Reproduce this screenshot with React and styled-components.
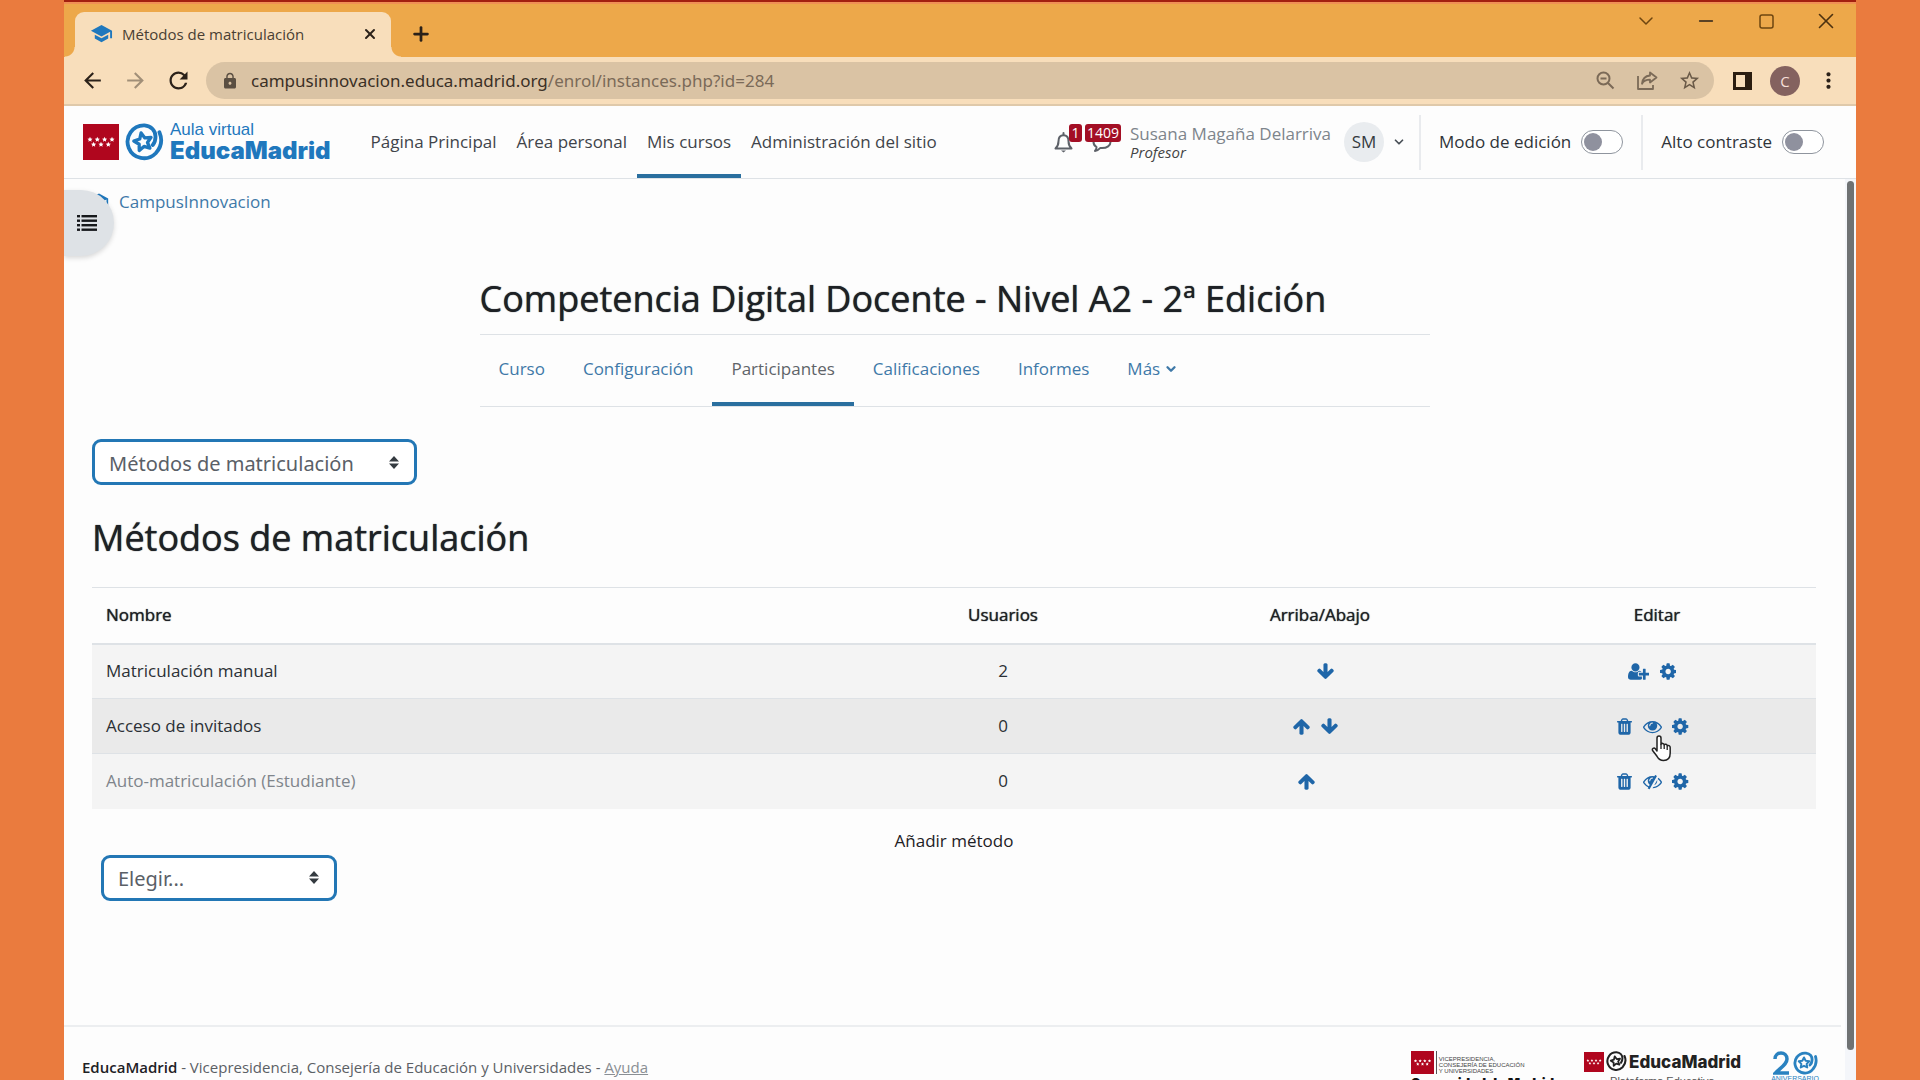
import React from "react";
import styled, { createGlobalStyle, css } from "styled-components";
import { ChevronDown, Minus, Plus, X } from "lucide-react";
import {
  MdArrowBack,
  MdArrowForward,
  MdRefresh,
  MdLock,
  MdStarBorder,
  MdMoreVert,
  MdSchool,
} from "react-icons/md";

const color = {
  desk: "#ea7b3e",
  strip: "#eda84a",
  chrome: "#f8debb",
  omnibox: "#dac3a4",
  page: "#fdfdfd",
  line: "#dee2e6",
  text: "#1d2125",
  link: "#3f79a8",
  accent: "#2a6f9f",
  icon: "#1f66a8",
  brand: "#1f78bd",
  red: "#b0061e",
};

const GlobalStyle = createGlobalStyle`
  *, *::before, *::after { box-sizing: border-box; }
  body {
    margin: 0;
    background: ${color.desk};
    color: ${color.text};
    font-family: "Open Sans", "Noto Sans", sans-serif;
    font-size: 17px;
    line-height: 26px;
  }
  button, select, input { font: inherit; color: inherit; }
  button { padding: 0; border: 0; background: none; cursor: pointer; }
  a { text-decoration: none; color: inherit; }
  svg { display: block; flex: none; }
`;

const Desktop = styled.div`
  height: 100vh;
  padding: 0 64px;
  overflow: hidden;
`;

const BrowserWindow = styled.div`
  display: flex;
  flex-direction: column;
  height: 100%;
  overflow: hidden;
  background: ${color.page};
`;

/* ---------- Browser chrome ---------- */

const TabStrip = styled.div`
  display: flex;
  align-items: flex-end;
  height: 57px;
  padding: 0 18px 0 11px;
  border-top: 2px solid #a3200f;
  background: ${color.strip};
  box-shadow: inset 0 2px #f09055;
`;

const BrowserTab = styled.div`
  position: relative;
  display: flex;
  align-items: center;
  width: 316px;
  height: 45px;
  padding: 0 12px 2px 15px;
  border-radius: 9px 9px 0 0;
  background: ${color.chrome};
  font-size: 15px;
  color: #4a3f33;

  &::before,
  &::after {
    content: "";
    position: absolute;
    bottom: 0;
    width: 10px;
    height: 10px;
  }
  &::before {
    right: 100%;
    background: radial-gradient(circle at 0 0, transparent 9px, ${color.chrome} 10px);
  }
  &::after {
    left: 100%;
    background: radial-gradient(circle at 100% 0, transparent 9px, ${color.chrome} 10px);
  }
`;

const TabTitle = styled.span`
  flex: 1;
  margin-left: 9px;
  white-space: nowrap;
`;

const ChromeButton = styled.button`
  display: flex;
  align-items: center;
  justify-content: center;
  width: ${(p) => p.$size || 24}px;
  height: ${(p) => p.$size || 24}px;
  color: ${(p) => p.$color || "#2b2119"};
`;

const NewTab = styled(ChromeButton)`
  margin: 0 0 11px 18px;
`;

const WindowControls = styled.div`
  display: flex;
  align-self: flex-start;
  gap: 36px;
  margin: 7px 0 0 auto;
`;

const Toolbar = styled.div`
  display: flex;
  align-items: center;
  height: 49px;
  padding: 0 16px;
  border-bottom: 2px solid #dfc9aa;
  background: ${color.chrome};
`;

const ToolGroup = styled.div`
  display: flex;
  align-items: center;
  gap: ${(p) => p.$gap}px;
`;

const Omnibox = styled.div`
  display: flex;
  flex: 1;
  align-items: center;
  height: 37px;
  margin: 0 16px;
  padding: 0 13px 0 15px;
  border-radius: 19px;
  background: ${color.omnibox};
`;

const Address = styled.div`
  flex: 1;
  margin-left: 12px;
  white-space: nowrap;
  color: #7a6a58;
  font-family: "Noto Sans", "Open Sans", sans-serif;

  b {
    font-weight: 400;
    color: #3b3026;
  }
`;

const ProfileBadge = styled.button`
  width: 30px;
  height: 30px;
  border-radius: 50%;
  background: #84625f;
  color: #f6dfd8;
  font-size: 15px;
`;

/* ---------- Site header ---------- */

const SiteHeader = styled.header`
  display: flex;
  align-items: stretch;
  height: 73px;
  padding: 0 32px 0 19px;
  border-bottom: 1px solid ${color.line};
`;

const Brand = styled.a`
  display: flex;
  align-items: center;
  gap: 6px;
  margin-right: 30px;
`;

const BrandText = styled.span`
  display: flex;
  flex-direction: column;
  color: ${color.brand};
  font-family: "Liberation Sans", Arial, sans-serif;
  font-size: 17px;
  line-height: 18px;

  strong {
    font-family: Inter, "Liberation Sans", sans-serif;
    font-weight: 900;
    font-size: 24px;
    line-height: 24px;
  }
`;

const MainNav = styled.nav`
  display: flex;
`;

const activeBar = css`
  box-shadow: inset 0 -4px ${color.accent};
`;

const MainNavLink = styled.a`
  display: flex;
  align-items: center;
  padding: 0 10px;
  color: #3f444a;
  white-space: nowrap;
  ${(p) => p.$active && activeBar}
`;

const UserArea = styled.div`
  display: flex;
  align-items: center;
  margin-left: auto;
`;

const Notice = styled.button`
  position: relative;
  display: flex;
  margin-right: ${(p) => p.$gap}px;
  color: #5d6168;
`;

const Count = styled.span`
  position: absolute;
  left: ${(p) => (p.$wide ? -7 : 15)}px;
  bottom: 11px;
  min-width: 13px;
  padding: 0 2px;
  border-radius: 3px;
  background: #a30f25;
  color: #fff;
  font-size: 14px;
  line-height: 18px;
`;

const UserName = styled.div`
  display: flex;
  flex-direction: column;
  margin-right: 13px;
  color: #7e858c;
  line-height: 20px;
  white-space: nowrap;

  em {
    color: #444;
    font-size: 15px;
    line-height: 16px;
  }
`;

const UserMenu = styled.button`
  display: flex;
  align-items: center;
  gap: 8px;
  color: #495057;
`;

const Initials = styled.span`
  width: 40px;
  border-radius: 50%;
  background: #e9ecef;
  color: #343a40;
  line-height: 40px;
`;

const SwitchLabel = styled.label`
  display: flex;
  align-items: center;
  gap: 10px;
  height: 55px;
  margin-left: ${(p) => p.$before}px;
  padding-left: 18px;
  border-left: 2px solid #e9ebee;
  color: #2f3439;
  white-space: nowrap;
`;

const Switch = styled.input`
  appearance: none;
  width: 42px;
  height: 24px;
  margin: 0;
  padding: 2px;
  border: 1px solid #8f959e;
  border-radius: 12px;
  background: #fff;

  &::before {
    content: "";
    display: block;
    width: 18px;
    height: 18px;
    border-radius: 50%;
    background: #8f919e;
  }
`;

/* ---------- Page body ---------- */

const Viewport = styled.div`
  display: flex;
  flex: 1;
  min-height: 0;
`;

const Page = styled.div`
  display: flex;
  flex: 1;
  flex-direction: column;
  overflow: hidden;
`;

const ScrollTrack = styled.div`
  width: 11px;
  padding: 2px 2px 0;
  background: #f4f6fa;
`;

const ScrollThumb = styled.div`
  height: 869px;
  border-radius: 4px;
  background: #6f7273;
`;

const TopRow = styled.div`
  position: relative;
  height: 90px;
  padding: 10px 0 0 55px;
  color: ${color.link};
`;

const DrawerToggle = styled.button`
  position: absolute;
  top: 11px;
  left: 0;
  display: flex;
  align-items: center;
  width: 50px;
  height: 66px;
  padding-left: 13px;
  border-radius: 0 33px 33px 0;
  background: #dee2e6;
  box-shadow: 0 2px 5px rgba(0, 0, 0, 0.15);
`;

const CrumbIcon = styled(MdSchool)`
  position: absolute;
  top: 12px;
  left: 25px;
  color: ${color.brand};
`;

const CourseHeader = styled.div`
  width: 100%;
  max-width: 950px;
  margin: 0 auto;
`;

/* A hairline glow thickens the strokes without changing the letter widths. */
const mediumWeight = css`
  font-weight: 400;
  text-shadow: 0 0 1px currentColor;
`;

const Heading = styled.h1`
  margin: 0;
  ${mediumWeight}
  font-size: 36px;
  line-height: 60px;
  white-space: nowrap;
`;

const SectionHeading = styled(Heading).attrs({ as: "h2" })`
  margin-top: 23px;
`;

const CourseNav = styled.nav`
  display: flex;
  height: 73px;
  margin-top: 5px;
  border-top: 1px solid ${color.line};
  border-bottom: 1px solid ${color.line};
`;

const CourseLink = styled.a`
  display: flex;
  align-items: center;
  gap: 4px;
  padding: 0 19px 3px;
  color: ${(p) => (p.$active ? "#5f6469" : color.link)};
  ${(p) => p.$active && activeBar}
`;

const Main = styled.main`
  flex: 1;
  padding: 32px 29px 0 28px;
`;

const SelectFrame = styled.span`
  display: grid;
  align-items: center;
  width: ${(p) => p.$width}px;
  color: #343a40;

  & > * {
    grid-area: 1 / 1;
  }
  svg {
    justify-self: end;
    margin-right: 18px;
    pointer-events: none;
  }
`;

const SelectBox = styled.select`
  appearance: none;
  width: 100%;
  height: 46px;
  padding: 3px 40px 0 14px;
  border: 3px solid #2377b5;
  border-radius: 9px;
  background: #fff;
  color: #5a6067;
  font-family: "Noto Sans", "Open Sans", sans-serif;
  font-size: 20px;
`;

const MethodTable = styled.table`
  width: 100%;
  margin-top: 19px;
  border-collapse: collapse;
  table-layout: fixed;
`;

const HeadCell = styled.th`
  width: ${(p) => p.$width || "auto"};
  height: 56px;
  padding: 0 14px;
  border-top: 1px solid ${color.line};
  border-bottom: 2px solid ${color.line};
  ${mediumWeight}
  text-align: ${(p) => p.$align || "center"};
`;

const Row = styled.tr`
  border-top: 1px solid ${color.line};
  background: ${(p) => (p.$hover ? "#eaeaea" : "#f4f4f4")};
  color: ${(p) => (p.$dim ? "#7f858b" : "#2b3035")};
`;

const Cell = styled.td`
  height: 55px;
  padding: 0 14px;
  color: ${(p) => (p.$strong ? "#2b3035" : "inherit")};
  text-align: ${(p) => p.$align || "center"};
`;

const Actions = styled.div`
  display: flex;
  justify-content: center;
  color: ${color.icon};
`;

const Action = styled.button`
  position: relative;
  display: flex;
  justify-content: center;
  min-width: 19px;
  margin-right: 9px;
`;

const Spacer = styled.span`
  width: 19px;
`;

const Cursor = styled.svg`
  position: absolute;
  top: 18px;
  left: 8px;
  z-index: 1;
`;

const AddMethod = styled.div`
  display: flex;
  flex-direction: column;
  padding: 19px 9px 0;

  label {
    align-self: center;
    margin-bottom: 1px;
  }
`;

/* ---------- Footer ---------- */

const Footer = styled.footer`
  display: flex;
  align-items: flex-start;
  justify-content: space-between;
  height: 55px;
  margin-right: 4px;
  padding: 24px 22px 0 18px;
  border-top: 2px solid #eceef0;
  white-space: nowrap;
`;

const FooterNote = styled.p`
  margin: 3px 0 0;
  color: #5b6065;
  font-size: 15px;

  strong {
    color: ${color.text};
    font-weight: 600;
  }
  a {
    color: #8a8f94;
    text-decoration: underline;
  }
`;

const FooterLogos = styled.div`
  display: flex;
  align-items: flex-start;
  gap: 30px;
  font-family: "Liberation Sans", Arial, sans-serif;
`;

const FooterLogo = styled.div`
  display: flex;
  flex-direction: column;
`;

const LogoRow = styled.div`
  display: flex;
  align-items: center;
  gap: ${(p) => p.$gap}px;
`;

const CouncilText = styled.div`
  padding: 5px 0 0 2px;
  border-left: 1px solid #555;
  color: #444;
  font-size: 6px;
  line-height: 6px;
`;

const RegionName = styled.div`
  color: #111;
  font-family: Inter, sans-serif;
  font-weight: 900;
  font-size: 13px;
  line-height: 18px;
`;

const PlatformName = styled.div`
  color: #222;
  font-family: Inter, sans-serif;
  font-weight: 800;
  font-size: 17px;
  line-height: 20px;
`;

const PlatformNote = styled.div`
  padding: 2px 0 0 26px;
  color: #555;
  font-size: 11px;
  line-height: 14px;
`;

const Anniversary = styled(FooterLogo)`
  align-items: center;
  color: #2a82c0;
  font-size: 7px;
  line-height: 8px;
`;

/* ---------- Drawings ---------- */

const starPoints = (cx, cy, outer, inner) =>
  Array.from({ length: 10 }, (_, i) => {
    const radius = i % 2 ? inner : outer;
    const angle = (Math.PI / 5) * i - Math.PI / 2;
    return `${cx + radius * Math.cos(angle)},${cy + radius * Math.sin(angle)}`;
  }).join(" ");

const MadridFlag = ({ size }) => (
  <svg width={size} height={size} viewBox="0 0 36 36" aria-hidden="true">
    <rect width="36" height="36" fill={color.red} />
    {[7, 14.3, 21.6, 29].map((x) => (
      <polygon key={x} points={starPoints(x, 15.5, 2.7, 1.3)} fill="#fff" />
    ))}
    {[10.6, 18, 25.3].map((x) => (
      <polygon key={x} points={starPoints(x, 20.5, 2.7, 1.3)} fill="#fff" />
    ))}
  </svg>
);

const StarRing = ({ size, tone }) => (
  <svg width={size} height={size} viewBox="0 0 40 40" fill="none" stroke={tone} aria-hidden="true">
    <path
      d="M35.300 9.500C38.500 17 37 25 31.500 31A16.800 16.800 0 1 1 20 2.500C27 3 31.300 8 31.300 14c0 3.500-.8 6-2.800 8.500"
      strokeWidth="3.9"
      strokeLinecap="round"
    />
    <polygon
      points={starPoints(18.5, 19.5, 9.5, 4.6)}
      strokeWidth="3.4"
      strokeLinejoin="round"
      transform="rotate(-12 18.5 19.5)"
    />
  </svg>
);

const BellIcon = () => (
  <svg width="19" height="21" viewBox="0 0 19 21" fill="none" stroke="currentColor" strokeWidth="2">
    <path d="M9.500 3.200c-3.500 0-5 2.500-5 6 0 4-1.200 5.500-3 7.300h16c-1.800-1.800-3-3.300-3-7.300 0-3.500-1.500-6-5-6z" strokeLinejoin="round" />
    <path d="M9.500 1v2" strokeLinecap="round" />
    <path d="M7 18.500h5l-2.500 2z" fill="currentColor" stroke="none" />
  </svg>
);

const ChatIcon = () => (
  <svg width="20" height="21" viewBox="0 0 20 21" fill="none" stroke="currentColor" strokeWidth="2">
    <path d="M10 4c5 0 8.500 2.500 8.500 6s-3.500 6-8.500 6q-.8 0-1.600-.1c-1.400 1.500-3.400 2.900-5.400 3.100 1-1.200 1.600-2.500 1.500-4C2.600 13.900 1.500 12 1.500 10c0-3.500 3.500-6 8.500-6z" strokeLinejoin="round" />
  </svg>
);

const SortIcon = () => (
  <svg width="10" height="13" viewBox="0 0 10 13" fill="currentColor" aria-hidden="true">
    <path d="M5 0l5 5.500H0zM5 13l5-5.500H0z" />
  </svg>
);

const ListIcon = () => (
  <svg width="20" height="16" viewBox="0 0 20 16" fill="#16181b" aria-hidden="true">
    {[0, 4.5, 9, 13.5].map((y) => (
      <React.Fragment key={y}>
        <rect x="0" y={y} width="3" height="2.4" />
        <rect x="4.5" y={y} width="15.5" height="2.4" />
      </React.Fragment>
    ))}
  </svg>
);

const SearchMinusIcon = () => (
  <svg width="19" height="19" viewBox="0 0 19 19" fill="none" stroke="currentColor" strokeWidth="2">
    <circle cx="7.5" cy="7.5" r="6" />
    <path d="M12 12l5.500 5.500M4.500 7.500h6" />
  </svg>
);

const ShareIcon = () => (
  <svg width="21" height="19" viewBox="0 0 21 19" fill="none" stroke="currentColor" strokeWidth="1.8" strokeLinejoin="round">
    <path d="M1 5v13h15v-4" />
    <path d="M13 1.500l6.500 5-6.500 5V8.700c-4 0-6.500 1.300-8 4 .4-4.500 3-7.700 8-8.200z" />
  </svg>
);

const SidePanelIcon = () => (
  <svg width="19" height="18" viewBox="0 0 19 18" fill="none" aria-hidden="true">
    <rect x="1.5" y="1.5" width="16" height="15" stroke="#2b1d10" strokeWidth="3" />
    <rect x="12" y="1" width="6" height="16" fill="#2b1d10" />
  </svg>
);

const MaximizeIcon = () => (
  <svg width="15" height="15" viewBox="0 0 15 15" fill="none" stroke="currentColor" strokeWidth="1.5">
    <rect x="1" y="1" width="13" height="13" rx="2" />
  </svg>
);

const glyphs = {
  arrow: [
    1792,
    "M1675 971q0 51-37 90l-75 75q-38 38-91 38-54 0-90-38l-294-293v704q0 52-37.500 84.500t-90.500 32.500h-128q-53 0-90.500-32.500t-37.500-84.500v-704l-294 293q-36 38-90 38t-90-38l-75-75q-38-38-38-90 0-53 38-91l651-651q35-37 90-37 54 0 91 37l651 651q37 39 37 91z",
  ],
  cog: [
    1536,
    "M1024 896q0-106-75-181t-181-75-181 75-75 181 75 181 181 75 181-75 75-181zm512-109v222q0 12-8 23t-20 13l-185 28q-19 54-39 91 35 50 107 138 10 12 10 25t-9 23q-27 37-99 108t-94 71q-12 0-26-9l-138-108q-44 23-91 38-16 136-29 186-7 28-36 28h-222q-14 0-24.500-8.500t-11.500-21.500l-28-184q-49-16-90-37l-141 107q-10 9-25 9-14 0-25-11-126-114-165-168-7-10-7-23 0-12 8-23 15-21 51-66.500t54-70.500q-27-50-41-99l-183-27q-13-2-21-12.500t-8-23.500v-222q0-12 8-23t19-13l186-28q14-46 39-92-40-57-107-138-10-12-10-24 0-10 9-23 26-36 98.500-107.500t94.500-71.500q13 0 26 10l138 107q44-23 91-38 16-136 29-186 7-28 36-28h222q14 0 24.500 8.500t11.500 21.500l28 184q49 16 90 37l142-107q9-9 24-9 13 0 25 10 129 119 165 170 7 8 7 22 0 12-8 23-15 21-51 66.500t-54 70.500q26 50 41 98l183 28q13 2 21 12.500t8 23.500z",
  ],
  eye: [
    1792,
    "M1664 960q-152-236-381-353 61 104 61 225 0 185-131.500 316.500t-316.500 131.500-316.500-131.500-131.500-316.500q0-121 61-225-229 117-381 353 133 205 333.500 326.500t434.500 121.500 434.500-121.500 333.500-326.500zm-720-384q0-20-14-34t-34-14q-125 0-214.500 89.500t-89.500 214.500q0 20 14 34t34 14 34-14 14-34q0-86 61-147t147-61q20 0 34-14t14-34zm848 384q0 34-20 69-140 230-376.500 368.500t-499.500 138.500-499.500-139-376.500-368q-20-35-20-69t20-69q140-229 376.500-368t499.500-139 499.500 139 376.500 368q20 35 20 69z",
  ],
  eyeSlash: [
    1792,
    "M555 1335l78-141q-87-63-136-159t-49-203q0-121 61-225-229 117-381 353 167 258 427 375zm389-759q0-20-14-34t-34-14q-125 0-214.500 89.500t-89.500 214.500q0 20 14 34t34 14 34-14 14-34q0-86 61-147t147-61q20 0 34-14t14-34zm363-191q0 7-1 9-106 189-316 567t-315 566l-49 89q-10 16-28 16-12 0-134-70-16-10-16-28 0-12 44-87-143-65-263.500-173t-208.500-245q-20-31-20-69t20-69q153-235 380-371t496-136q89 0 180 17l54-97q10-16 28-16 5 0 18 6t31 15.500 33 18.500 31.500 18.500 19.500 11.500q16 10 16 27zm37 447q0 139-79 253.500t-209 164.500l280-502q8 45 8 84zm448 128q0 35-20 69-39 64-109 145-150 172-347.500 267t-419.500 95l74-132q212-18 392.500-137t301.500-307q-115-179-282-294l63-112q95 64 182.500 153t144.500 184q20 34 20 69z",
  ],
  userPlus: [
    2048,
    "M704 896q-159 0-271.500-112.500T320 512t112.500-271.500T704 128t271.500 112.500T1088 512 975.500 783.500 704 896zM1664 1024h352q13 0 22.500 9.500t9.500 22.500v192q0 13-9.500 22.500t-22.500 9.500h-352v352q0 13-9.500 22.500t-22.500 9.500h-192q-13 0-22.500-9.500t-9.500-22.500v-352h-352q-13 0-22.500-9.500t-9.500-22.500v-192q0-13 9.500-22.500t22.500-9.500h352v-352q0-13 9.500-22.500t22.500-9.500h192q13 0 22.500 9.500t9.500 22.500zM928 1248q0 52 38 90t90 38h256v238q-68 50-171 50h-874q-121 0-194-69t-73-190q0-53 3.500-103.500t14-109 26.500-108.500 43-97.500 62-81 85.500-53.500 111.500-20q19 0 39 17 79 61 154.500 91.500t164.500 30.500 164.500-30.500 154.500-91.500q20-17 39-17 132 0 217 96h-223q-52 0-90 38t-38 90z",
  ],
  trash: [
    1792,
    "M704 1376V672q0-14-9-23t-23-9h-64q-14 0-23 9t-9 23v704q0 14 9 23t23 9h64q14 0 23-9t9-23zm256 0V672q0-14-9-23t-23-9h-64q-14 0-23 9t-9 23v704q0 14 9 23t23 9h64q14 0 23-9t9-23zm256 0V672q0-14-9-23t-23-9h-64q-14 0-23 9t-9 23v704q0 14 9 23t23 9h64q14 0 23-9t9-23zm-544-992h448l-48-117q-7-9-17-11H738q-10 2-17 11zm928 32v64q0 14-9 23t-23 9h-96v948q0 83-47 143.500t-113 60.500H480q-66 0-113-58.500T320 1464V512h-96q-14 0-23-9t-9-23v-64q0-14 9-23t23-9h309l70-167q15-37 54-63t79-26h320q40 0 79 26t54 63l70 167h309q14 0 23 9t9 23z",
  ],
};

const Glyph = ({ name, flip }) => {
  const [width, path] = glyphs[name];
  return (
    <svg width={(width / 1792) * 19} height="19" viewBox={`0 0 ${width} 1792`} fill="currentColor" aria-hidden="true">
      <path
        d={path}
        fillRule={name === "trash" ? "evenodd" : "nonzero"}
        transform={flip ? "rotate(180 896 896)" : undefined}
      />
    </svg>
  );
};

const HandCursor = () => (
  <Cursor width="22" height="27" viewBox="0 0 22 27" aria-hidden="true">
    <path
      d="M6 3.200c0-2.800 4-2.800 4 0v6c.6-1.300 3-1 3.200.6.800-1 2.900-.6 3 1 1-.8 3-.2 3 1.600v5.600c0 4.500-2.500 7.500-6.700 7.500-3.500 0-5-1.600-6.500-4.200L1.600 15.500c-.9-1.900 1.400-3.300 2.700-1.800L6 16z"
      fill="#fff"
      stroke="#222"
      strokeWidth="1.5"
      strokeLinejoin="round"
    />
    <path d="M10 9v5M13.200 10v4M16.200 11v4" stroke="#222" strokeWidth="1.3" />
  </Cursor>
);

/* ---------- Data ---------- */

const mainLinks = ["Página Principal", "Área personal", "Mis cursos", "Administración del sitio"];
const courseLinks = ["Curso", "Configuración", "Participantes", "Calificaciones", "Informes", "Más"];
const methods = [
  { name: "Matriculación manual", users: 2, down: true, actions: ["userPlus", "cog"] },
  { name: "Acceso de invitados", users: 0, up: true, down: true, hover: true, actions: ["trash", "eye", "cog"] },
  { name: "Auto-matriculación (Estudiante)", users: 0, up: true, dim: true, actions: ["trash", "eyeSlash", "cog"] },
];
const actionLabels = {
  userPlus: "Matricular usuarios",
  cog: "Editar",
  trash: "Eliminar",
  eye: "Deshabilitar",
  eyeSlash: "Habilitar",
};

const Select = ({ width, value, ...rest }) => (
  <SelectFrame $width={width}>
    <SelectBox {...rest}>
      <option>{value}</option>
    </SelectBox>
    <SortIcon />
  </SelectFrame>
);

export default function App() {
  return (
    <Desktop>
      <GlobalStyle />
      <BrowserWindow>
        <TabStrip>
          <BrowserTab>
            <MdSchool size={23} color={color.brand} />
            <TabTitle>Métodos de matriculación</TabTitle>
            <ChromeButton $size={18} aria-label="Cerrar pestaña">
              <X size={16} strokeWidth={3} />
            </ChromeButton>
          </BrowserTab>
          <NewTab aria-label="Nueva pestaña">
            <Plus size={22} strokeWidth={3} />
          </NewTab>
          <WindowControls>
            <ChromeButton aria-label="Buscar pestañas" $color="#6d4510"><ChevronDown size={24} strokeWidth={1.5} /></ChromeButton>
            <ChromeButton aria-label="Minimizar"><Minus size={22} strokeWidth={1.5} /></ChromeButton>
            <ChromeButton aria-label="Maximizar" $color="#6d4510"><MaximizeIcon /></ChromeButton>
            <ChromeButton aria-label="Cerrar" $color="#4d3210"><X size={26} strokeWidth={1.5} /></ChromeButton>
          </WindowControls>
        </TabStrip>

        <Toolbar>
          <ToolGroup $gap={19}>
            <ChromeButton aria-label="Atrás"><MdArrowBack size={25} /></ChromeButton>
            <ChromeButton aria-label="Adelante" $color="#a18f78"><MdArrowForward size={25} /></ChromeButton>
            <ChromeButton aria-label="Recargar"><MdRefresh size={27} /></ChromeButton>
          </ToolGroup>
          <Omnibox>
            <MdLock size={18} color="#5b4f42" />
            <Address>
              <b>campusinnovacion.educa.madrid.org</b>/enrol/instances.php?id=284
            </Address>
            <ToolGroup $gap={18}>
              <ChromeButton aria-label="Zoom" $color="#7b6a57"><SearchMinusIcon /></ChromeButton>
              <ChromeButton aria-label="Compartir" $color="#7b6a57"><ShareIcon /></ChromeButton>
              <ChromeButton aria-label="Favorito" $color="#6a5a48"><MdStarBorder size={23} /></ChromeButton>
            </ToolGroup>
          </Omnibox>
          <ToolGroup $gap={16}>
            <ChromeButton aria-label="Panel lateral"><SidePanelIcon /></ChromeButton>
            <ProfileBadge aria-label="Perfil">C</ProfileBadge>
            <ChromeButton aria-label="Menú"><MdMoreVert size={25} /></ChromeButton>
          </ToolGroup>
        </Toolbar>

        <SiteHeader>
          <Brand href="#">
            <MadridFlag size={36} />
            <StarRing size={39} tone={color.brand} />
            <BrandText>
              Aula virtual
              <strong>EducaMadrid</strong>
            </BrandText>
          </Brand>
          <MainNav>
            {mainLinks.map((label) => (
              <MainNavLink key={label} href="#" $active={label === "Mis cursos"}>{label}</MainNavLink>
            ))}
          </MainNav>
          <UserArea>
            <Notice $gap={19} aria-label="Notificaciones">
              <BellIcon />
              <Count>1</Count>
            </Notice>
            <Notice $gap={18} aria-label="Mensajes">
              <ChatIcon />
              <Count $wide>1409</Count>
            </Notice>
            <UserName>
              Susana Magaña Delarriva
              <em>Profesor</em>
            </UserName>
            <UserMenu>
              <Initials>SM</Initials>
              <ChevronDown size={14} strokeWidth={3} />
            </UserMenu>
            <SwitchLabel $before={13}>
              Modo de edición
              <Switch type="checkbox" />
            </SwitchLabel>
            <SwitchLabel $before={18}>
              Alto contraste
              <Switch type="checkbox" />
            </SwitchLabel>
          </UserArea>
        </SiteHeader>

        <Viewport>
          <Page>
            <TopRow>
              <CrumbIcon size={20} />
              <a href="#">CampusInnovacion</a>
              <DrawerToggle aria-label="Abrir índice del curso"><ListIcon /></DrawerToggle>
            </TopRow>
            <CourseHeader>
              <Heading>Competencia Digital Docente - Nivel A2 - 2ª Edición</Heading>
              <CourseNav>
                {courseLinks.map((label) => (
                  <CourseLink key={label} href="#" $active={label === "Participantes"}>
                    {label}
                    {label === "Más" && <ChevronDown size={14} strokeWidth={4} />}
                  </CourseLink>
                ))}
              </CourseNav>
            </CourseHeader>
            <Main>
              <Select width={325} value="Métodos de matriculación" aria-label="Sección de participantes" />
              <SectionHeading>Métodos de matriculación</SectionHeading>
              <MethodTable>
                <thead>
                  <tr>
                    <HeadCell $align="left">Nombre</HeadCell>
                    <HeadCell $width="278px">Usuarios</HeadCell>
                    <HeadCell $width="356px">Arriba/Abajo</HeadCell>
                    <HeadCell $width="318px">Editar</HeadCell>
                  </tr>
                </thead>
                <tbody>
                  {methods.map((m) => (
                    <Row key={m.name} $hover={m.hover} $dim={m.dim}>
                      <Cell $align="left">{m.name}</Cell>
                      <Cell $strong>{m.users}</Cell>
                      <Cell>
                        <Actions>
                          {m.up ? <Action aria-label="Arriba"><Glyph name="arrow" /></Action> : <Spacer />}
                          {m.down ? <Action aria-label="Abajo"><Glyph name="arrow" flip /></Action> : <Spacer />}
                        </Actions>
                      </Cell>
                      <Cell>
                        <Actions>
                          {m.actions.map((name) => (
                            <Action key={name} aria-label={actionLabels[name]}>
                              <Glyph name={name} />
                              {name === "eye" && <HandCursor />}
                            </Action>
                          ))}
                        </Actions>
                      </Cell>
                    </Row>
                  ))}
                </tbody>
              </MethodTable>
              <AddMethod>
                <label htmlFor="add-method">Añadir método</label>
                <Select id="add-method" width={236} value="Elegir..." />
              </AddMethod>
            </Main>
            <Footer>
              <FooterNote>
                <strong>EducaMadrid</strong> - Vicepresidencia, Consejería de Educación y Universidades - <a href="#">Ayuda</a>
              </FooterNote>
              <FooterLogos>
                <FooterLogo>
                  <LogoRow $gap={2}>
                    <MadridFlag size={23} />
                    <CouncilText>
                      VICEPRESIDENCIA,<br />CONSEJERÍA DE EDUCACIÓN<br />Y UNIVERSIDADES
                    </CouncilText>
                  </LogoRow>
                  <RegionName>Comunidad de Madrid</RegionName>
                </FooterLogo>
                <FooterLogo>
                  <LogoRow $gap={2}>
                    <MadridFlag size={20} />
                    <StarRing size={21} tone="#222" />
                    <PlatformName>EducaMadrid</PlatformName>
                  </LogoRow>
                  <PlatformNote>Plataforma Educativa</PlatformNote>
                </FooterLogo>
                <Anniversary>
                  <svg width="45" height="24" viewBox="0 0 45 24" fill="none" stroke="#2a82c0" aria-hidden="true">
                    <path d="M2 8c0-8 12-8 12 0 0 5-5.500 8-11.500 14H16" strokeWidth="3.5" />
                    <path d="M42.500 5.500c1.500 5 .5 9-2.500 12.500A10 10 0 1 1 33 2.100C37 2.500 39.500 5.500 39 9.500c-.2 2-.8 3.500-2 4.500" strokeWidth="2.8" strokeLinecap="round" />
                    <polygon points={starPoints(31, 12, 5.5, 2.8)} strokeWidth="2" strokeLinejoin="round" />
                  </svg>
                  ANIVERSARIO
                </Anniversary>
              </FooterLogos>
            </Footer>
          </Page>
          <ScrollTrack>
            <ScrollThumb />
          </ScrollTrack>
        </Viewport>
      </BrowserWindow>
    </Desktop>
  );
}
